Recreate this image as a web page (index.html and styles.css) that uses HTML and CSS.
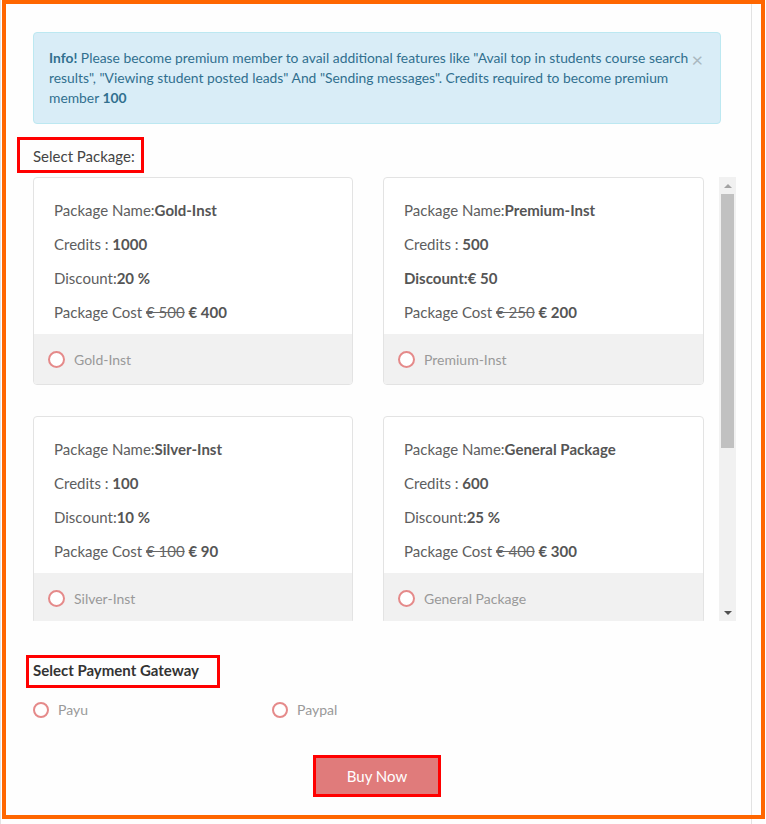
FILE: index.html
```html
<!DOCTYPE html>
<html>
<head>
<meta charset="utf-8">
<link rel="stylesheet" href="styles.css">
</head>
<body>
<div class="modal">
  <div class="alert">
    <span class="close">&times;</span>
    <b>Info!</b> Please become premium member to avail additional features like "Avail top in students course search results", "Viewing student posted leads" And "Sending messages". Credits required to become premium member <b>100</b>
  </div>

  <div class="label-box">Select Package:</div>

  <div class="packages">
    <div class="viewport">
      <div class="grid">
        <div class="card">
          <div class="card-body">
            <p>Package Name:<b>Gold-Inst</b></p>
            <p>Credits : <b>1000</b></p>
            <p>Discount:<b>20 %</b></p>
            <p>Package Cost <s>€ 500</s> <b>€ 400</b></p>
          </div>
          <div class="card-foot"><span class="radio"></span>Gold-Inst</div>
        </div>
        <div class="card">
          <div class="card-body">
            <p>Package Name:<b>Premium-Inst</b></p>
            <p>Credits : <b>500</b></p>
            <p><b>Discount:€ 50</b></p>
            <p>Package Cost <s>€ 250</s> <b>€ 200</b></p>
          </div>
          <div class="card-foot"><span class="radio"></span>Premium-Inst</div>
        </div>
        <div class="card">
          <div class="card-body">
            <p>Package Name:<b>Silver-Inst</b></p>
            <p>Credits : <b>100</b></p>
            <p>Discount:<b>10 %</b></p>
            <p>Package Cost <s>€ 100</s> <b>€ 90</b></p>
          </div>
          <div class="card-foot"><span class="radio"></span>Silver-Inst</div>
        </div>
        <div class="card">
          <div class="card-body">
            <p>Package Name:<b>General Package</b></p>
            <p>Credits : <b>600</b></p>
            <p>Discount:<b>25 %</b></p>
            <p>Package Cost <s>€ 400</s> <b>€ 300</b></p>
          </div>
          <div class="card-foot"><span class="radio"></span>General Package</div>
        </div>
        <div class="card">
          <div class="card-body">
            <p>Package Name:<b>Bronze-Inst</b></p>
            <p>Credits : <b>50</b></p>
            <p>Discount:<b>5 %</b></p>
            <p>Package Cost <s>€ 60</s> <b>€ 50</b></p>
          </div>
          <div class="card-foot"><span class="radio"></span>Bronze-Inst</div>
        </div>
      </div>
    </div>
    <div class="scrollbar">
      <div class="sb-btn"><span class="arrow up"></span></div>
      <div class="sb-track"><div class="sb-thumb"></div></div>
      <div class="sb-btn"><span class="arrow down"></span></div>
    </div>
  </div>

  <div class="label-box pay">Select Payment Gateway</div>

  <div class="gateways">
    <label class="gw"><span class="radio sm"></span>Payu</label>
    <label class="gw"><span class="radio sm"></span>Paypal</label>
  </div>

  <div class="actions">
    <button class="buy">Buy Now</button>
  </div>
</div>
<div class="frame"></div>
</body>
</html>
```

FILE: styles.css
```css
html, body {
  margin: 0;
  padding: 0;
  background: #fefefe;
  font-family: Lato, "Open Sans", sans-serif;
  color: #555;
}

.modal {
  width: 752px;
  min-height: 824px;
  box-sizing: border-box;
  border-left: 1px solid #e2e2e2;
  border-right: 1px solid #e2e2e2;
  padding: 32px 0 0 32px;
  background: #fefefe;
}

.alert {
  position: relative;
  width: 688px;
  box-sizing: border-box;
  background: #d9edf7;
  border: 1px solid #bce8f1;
  border-radius: 4px;
  color: #31708f;
  font-size: 13.85px;
  line-height: 20px;
  padding: 15px 28px 15px 15px;
}
.alert b { font-weight: 700; }

.close {
  position: absolute;
  right: 17px;
  top: 16px;
  font-size: 20px;
  line-height: 20px;
  color: #a9b8c0;
}

.label-box {
  width: fit-content;
  margin: 13px 0 0 -16px;
  border: 3px solid #ff0000;
  padding: 6px 6px 4px 13px;
  font-size: 15px;
  line-height: 20px;
  color: #444;
}

.packages {
  display: flex;
  margin-top: 4px;
  width: 703px;
  height: 444px;
}

.viewport {
  flex: 1;
  overflow: hidden;
}

.grid {
  display: grid;
  grid-template-columns: 320px 321px;
  column-gap: 30px;
  row-gap: 31px;
  padding-bottom: 31px;
}

.card {
  border: 1px solid #e3e3e3;
  border-radius: 4px;
  background: #fff;
  overflow: hidden;
}

.card-body {
  padding: 15px 20px 5px;
}
.card-body p {
  margin: 0;
  font-size: 15px;
  line-height: 34px;
  color: #5e5e5e;
}
.card-body b { font-weight: 700; color: #555; }
.card-body s { color: #666; }

.card-foot {
  height: 50px;
  background: #f1f1f1;
  display: flex;
  align-items: center;
  padding-left: 14px;
  font-size: 14px;
  color: #999;
}

.radio {
  display: inline-block;
  width: 13px;
  height: 13px;
  border: 2px solid #e58a8a;
  border-radius: 50%;
  margin-right: 9px;
  background: #fff;
  flex: none;
}
.radio.sm {
  width: 12px;
  height: 12px;
  margin-right: 9px;
}

.scrollbar {
  width: 17px;
  display: flex;
  flex-direction: column;
  background: #f1f1f1;
}
.sb-btn {
  height: 17px;
  display: flex;
  align-items: center;
  justify-content: center;
}
.sb-track {
  flex: 1;
  padding: 0 2px;
}
.sb-thumb {
  height: 254px;
  background: #c1c1c1;
}
.arrow {
  width: 0;
  height: 0;
  border-left: 4px solid transparent;
  border-right: 4px solid transparent;
}
.arrow.up { border-bottom: 4px solid #a3a3a3; }
.arrow.down { border-top: 4px solid #505050; }

.label-box.pay {
  margin: 34px 0 0 -7px;
  padding: 2px 18px 5px 4px;
  font-weight: 700;
  color: #333;
}

.gateways {
  display: flex;
  margin-top: 13px;
  font-size: 14px;
  color: #999;
}
.gw {
  display: flex;
  align-items: center;
  width: 239px;
}

.actions {
  display: flex;
  justify-content: center;
  width: 688px;
  margin-top: 37px;
}
.buy {
  border: 3px solid #ff0000;
  background: #e07b7b;
  color: #fff;
  font-family: Lato, sans-serif;
  font-size: 15px;
  width: 128px;
  height: 42px;
  padding: 0;
}

.frame {
  position: absolute;
  left: 2px;
  top: 0;
  width: 763px;
  height: 819px;
  box-sizing: border-box;
  border: 4px solid #ff6600;
  pointer-events: none;
}
```
